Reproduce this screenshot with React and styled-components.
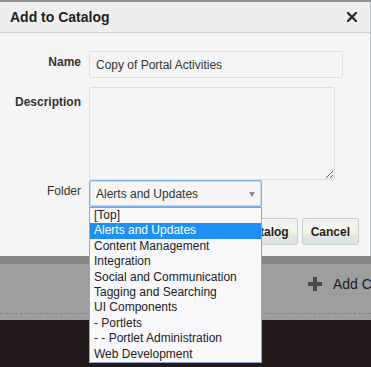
import React from "react";
import styled, { createGlobalStyle } from "styled-components";

const Global = createGlobalStyle`
  html, body { margin: 0; padding: 0; }
  body {
    width: 371px;
    height: 367px;
    overflow: hidden;
    background: #9e9e9e;
    font-family: "Liberation Sans", Arial, sans-serif;
  }
  * { box-sizing: border-box; }
`;

const Page = styled.div`
  display: flex;
  flex-direction: column;
  height: 367px;
`;

const TopStrip = styled.div`
  height: 2px;
  background: #929292;
`;

const Dialog = styled.section`
  background: #f5f5f5;
  border-right: 1px solid #b8bec3;
  display: flex;
  flex-direction: column;
  position: relative;
  z-index: 2;
`;

const Header = styled.header`
  height: 31px;
  background: #eeeeee;
  border-bottom: 1px solid #cbd2d8;
  display: flex;
  align-items: center;
  justify-content: space-between;
  padding: 0 13px 0 10px;
`;

const Title = styled.h1`
  margin: 0;
  font-size: 14px;
  font-weight: 700;
  color: #1f1f1f;
  line-height: 16px;
`;

const CloseButton = styled.button`
  border: 0;
  background: none;
  padding: 0;
  width: 10px;
  height: 10px;
  display: flex;
  cursor: pointer;
`;

const Body = styled.div`
  padding: 18px 11px 11px 0;
  display: flex;
  flex-direction: column;
`;

const Field = styled.div`
  display: flex;
  align-items: flex-start;
  gap: 8px;
  margin-top: ${(p) => p.$mt || 0}px;
`;

const Label = styled.label`
  width: 81px;
  flex: none;
  text-align: right;
  font-size: 12px;
  line-height: 14px;
  font-weight: ${(p) => (p.$bold ? 700 : 400)};
  color: #333;
  padding-top: ${(p) => p.$pt || 4}px;
`;

const TextInput = styled.input`
  width: 254px;
  height: 27px;
  border: 1px solid #dbe1e1;
  border-radius: 2px;
  background: #f5f5f5;
  padding: 0 6px;
  font-family: inherit;
  font-size: 12px;
  color: #333;
  outline: none;
`;

const TextArea = styled.textarea`
  width: 246px;
  height: 93px;
  border: 1px solid #dbe1e1;
  border-radius: 2px;
  background: #f5f5f5;
  padding: 4px 6px;
  font-family: inherit;
  font-size: 12px;
  color: #333;
  outline: none;
  display: block;
  margin: 0;
`;

const SelectWrap = styled.div`
  position: relative;
  width: 173px;
`;

const SelectBox = styled.div`
  height: 27px;
  border: 1px solid #7eaee6;
  box-shadow: inset 0 0 0 1px #c6dcf5;
  border-radius: 2px;
  background: #f5f5f5;
  display: flex;
  align-items: center;
  justify-content: space-between;
  padding: 0 6px 0 6px;
  font-size: 12px;
  color: #333;
`;

const Arrow = styled.span`
  width: 0;
  height: 0;
  border-left: 3.5px solid transparent;
  border-right: 3.5px solid transparent;
  border-top: 5px solid #8a8a8a;
  margin-top: 1px;
`;

const List = styled.ul`
  position: absolute;
  top: 100%;
  left: 0;
  width: 173px;
  margin: 0;
  padding: 0;
  list-style: none;
  background: #f8f8fa;
  border: 1px solid #8ea4c8;
  z-index: 5;
`;

const Option = styled.li`
  height: 15.4px;
  line-height: 15.4px;
  padding-left: 4px;
  font-size: 12px;
  white-space: nowrap;
  color: ${(p) => (p.$active ? "#ffffff" : "#222")};
  background: ${(p) => (p.$active ? "#1e8ff5" : "transparent")};
`;

const Buttons = styled.div`
  display: flex;
  justify-content: flex-end;
  gap: 4px;
  margin-top: 11px;
`;

const Button = styled.button`
  height: 27px;
  padding: 0 8px;
  border: 1px solid #c7cfcf;
  border-radius: 3px;
  background: linear-gradient(
    #f1f2f2 0%,
    #f3f4ee 30%,
    #f5f4dc 48%,
    #f4f3dc 56%,
    #e1e6e6 66%,
    #dde3e3 100%
  );
  font-family: inherit;
  font-size: 12px;
  font-weight: 700;
  color: #1f1f1f;
  cursor: pointer;
`;

const Shade = styled.div`
  height: 8px;
  background: #878787;
`;

const Toolbar = styled.div`
  height: 56px;
  background: #9e9e9e;
`;

const ToolRow = styled.div`
  height: 50px;
  border-bottom: 1px dashed #858585;
  display: flex;
  align-items: flex-start;
  gap: 10px;
  padding: 12px 0 0 307px;
  overflow: hidden;
  white-space: nowrap;
`;

const PlusIcon = styled.svg`
  flex: none;
  display: block;
`;

const AddText = styled.span`
  flex: none;
  font-size: 14px;
  line-height: 16px;
  color: #1a1a28;
`;

const Footer = styled.div`
  flex: 1;
  background: #231b1b;
`;

const folders = [
  "[Top]",
  "Alerts and Updates",
  "Content Management",
  "Integration",
  "Social and Communication",
  "Tagging and Searching",
  "UI Components",
  "- Portlets",
  "- - Portlet Administration",
  "Web Development",
];

export default function App() {
  return (
    <>
      <Global />
      <Page>
        <TopStrip />
        <Dialog>
          <Header>
            <Title>Add to Catalog</Title>
            <CloseButton aria-label="Close">
              <svg width="10" height="10" viewBox="0 0 10 10">
                <path
                  d="M1 1 L9 9 M9 1 L1 9"
                  stroke="#2e2e2e"
                  strokeWidth="2.4"
                  strokeLinecap="square"
                />
              </svg>
            </CloseButton>
          </Header>
          <Body>
            <Field>
              <Label $bold $pt={4}>Name</Label>
              <TextInput defaultValue="Copy of Portal Activities" />
            </Field>
            <Field $mt={9}>
              <Label $bold $pt={8}>Description</Label>
              <TextArea />
            </Field>
            <Field>
              <Label $pt={4}>Folder</Label>
              <SelectWrap>
                <SelectBox>
                  <span>Alerts and Updates</span>
                  <Arrow />
                </SelectBox>
                <List>
                  {folders.map((f) => (
                    <Option key={f} $active={f === "Alerts and Updates"}>
                      {f}
                    </Option>
                  ))}
                </List>
              </SelectWrap>
            </Field>
            <Buttons>
              <Button>Add to Catalog</Button>
              <Button>Cancel</Button>
            </Buttons>
          </Body>
        </Dialog>
        <Shade />
        <Toolbar>
          <ToolRow>
            <PlusIcon width="16" height="16" viewBox="0 0 16 16">
              <path d="M8 1 V15 M1 8 H15" stroke="#4a4a4a" strokeWidth="4" />
            </PlusIcon>
            <AddText>Add Content</AddText>
          </ToolRow>
        </Toolbar>
        <Footer />
      </Page>
    </>
  );
}
